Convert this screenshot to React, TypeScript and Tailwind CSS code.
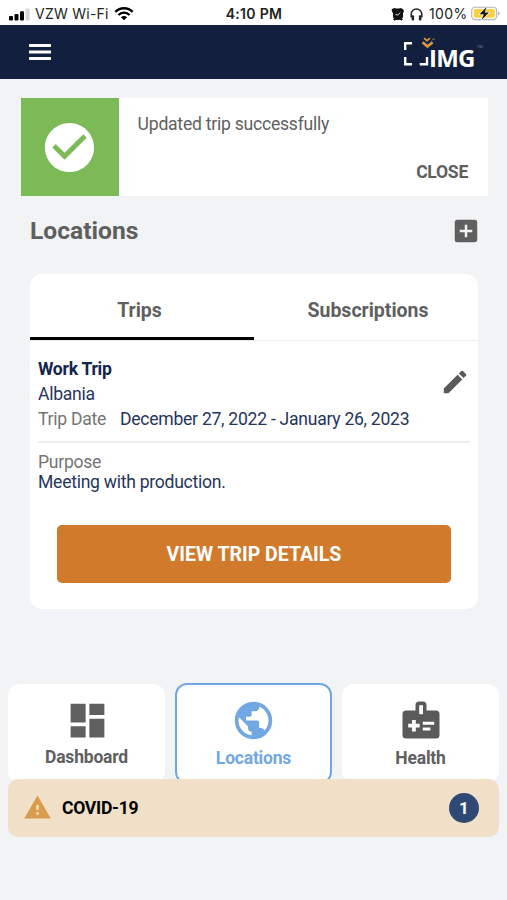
import type { ReactNode } from 'react';
import { MdAddBox, MdCheckCircle, MdDashboard, MdEdit, MdPublic, MdWarning } from 'react-icons/md';

const TABS = [
    { key: 'trips', label: 'Trips' },
    { key: 'subscriptions', label: 'Subscriptions' },
] as const;

function StatusBar() {
    return (
        <div className="flex h-[25px] shrink-0 items-center bg-white pt-[3px] font-[Inter] text-[14px] leading-[20px] text-[#222]">
            <div className="flex w-[200px] items-center pl-[9px]">
                <svg width="21" height="13" viewBox="0 0 21 13">
                    <rect x="0" y="8" width="4" height="4.5" rx="1" fill="#000" />
                    <rect x="5.5" y="6" width="4" height="6.5" rx="1" fill="#000" />
                    <rect x="11" y="3.2" width="4" height="9.3" rx="1" fill="#000" />
                    <rect x="16.6" y="0.5" width="4" height="12" rx="1" fill="#d6d6d6" />
                </svg>
                <span className="ml-[5px] w-[75px] whitespace-nowrap text-[14px] tracking-[0.25px]">VZW Wi-Fi</span>
                <svg className="-mt-[2px] ml-[4px]" width="20" height="15" viewBox="0 0 20 15" fill="none" stroke="#000" strokeWidth="2.4">
                    <path d="M1.4 5.8a12.3 12.3 0 0 1 17.2 0" />
                    <path d="M4.4 9a7.9 7.9 0 0 1 11.2 0" />
                    <path d="M6.9 11.2a4.4 4.4 0 0 1 6.2 0L10 14.3z" fill="#000" stroke="none" />
                </svg>
            </div>
            <div className="w-[108px] text-center text-[14px] font-semibold tracking-[0.3px]">4:10 PM</div>
            <div className="flex w-[199px] items-center pl-[83px]">
                <svg className="shrink-0" width="13" height="13" viewBox="0 0 13 13">
                    <path d="M1 1.5L3.5.5 5 1h3l1.500-.5 2.500 1 .3 2.500-.8 1v4.200l-.8 1.200.6 1.200-1 .6-1.100-.8H4.800l-1.100.8-1-.6.6-1.200-.8-1.200V5l-.8-1z" fill="#111" stroke="#111" strokeWidth="1" />
                    <path d="M6.700 7.100L9.100 4.700M6.700 7.100L4.600 6.500" stroke="#fff" strokeWidth="0.9" />
                </svg>
                <svg className="ml-[6px] shrink-0" width="13" height="13" viewBox="0 0 13 13">
                    <path d="M1.2 9.5V6.3a5.3 5.3 0 0 1 10.6 0v3.2" fill="none" stroke="#222" strokeWidth="1.5" />
                    <rect x="1.6" y="7.3" width="2.5" height="5.2" rx="1" fill="#222" />
                    <rect x="8.9" y="7.3" width="2.5" height="5.2" rx="1" fill="#222" />
                </svg>
                <span className="ml-[6px] w-[39px] whitespace-nowrap text-[14px] tracking-[0.35px]">100%</span>
                <svg className="-mt-[2px] ml-[3px] shrink-0" width="30" height="15" viewBox="0 0 30 15">
                    <rect x="0.7" y="1.2" width="25" height="12.4" rx="3.6" fill="#fff" stroke="#b5b5ae" strokeWidth="1.1" />
                    <rect x="2.6" y="3.1" width="21.2" height="8.6" rx="2" fill="#fccf3e" />
                    <path d="M27.2 5.3a2.3 2.3 0 0 1 0 4.2z" fill="#aaa" />
                    <path d="M15.8 0.8L8.6 8.2h4.2l-2.2 5.9 7.3-7.5h-4.2z" fill="#111" stroke="#fff" strokeWidth="1.2" paintOrder="stroke" />
                </svg>
            </div>
        </div>
    );
}

function Logo() {
    return (
        <div className="relative h-[34px] w-[82px]">
            <svg width="82" height="34" viewBox="0 0 82 34">
                <g fill="none" stroke="#fff" strokeWidth="2.4">
                    <path d="M10 8.200H3.200V15" />
                    <path d="M3.200 22v7.300H10" />
                    <path d="M25 22v7.300h-7.300" />
                </g>
                <g fill="none" stroke="#dc9841">
                    <path d="M20.500 7.200l5 4.300 5-4.300" strokeWidth="2.6" />
                    <path d="M22 3.200l3 2.500 3-2.500" strokeWidth="1.7" />
                    <path d="M30 5.500l1.200-1.800 1.800.8" stroke="#8f7452" strokeWidth="1" />
                </g>
            </svg>
            <span className="absolute left-[27px] top-[6px] font-['Open_Sans'] text-[24px] font-bold leading-[33px] tracking-[-0.8px] text-white">IMG</span>
            <span className="absolute left-[75px] top-[8px] font-['Open_Sans'] text-[4px] leading-[8px] text-[#77809a]">TM</span>
        </div>
    );
}

function HealthBadge() {
    return (
        <svg width="38" height="38" viewBox="0 0 38 38">
            <path d="M13.5 9.5V4A3.5 3.5 0 0 1 17 .5h4A3.5 3.5 0 0 1 24.5 4v5.5H34a3.5 3.5 0 0 1 3.5 3.5v21a3.5 3.5 0 0 1-3.5 3.5H4A3.5 3.5 0 0 1 .5 34V13A3.5 3.5 0 0 1 4 9.5z" fill="#5a5a5a" />
            <path d="M17.2 4.2H21v9h-3.800z" fill="#fff" />
            <path d="M10 19h3.800v3.800h3.800v3.800h-3.800v3.800H10v-3.800H6.200v-3.800H10zM20.800 20.800h11.400v2.900H20.800zM20.800 26.500h7.600v2.900h-7.600z" fill="#fff" />
        </svg>
    );
}

function NavCard({ icon, label, active = false }: { icon: ReactNode; label: string; active?: boolean }) {
    return (
        <div className={`flex w-[157px] flex-col items-center rounded-[12px] bg-white ${active
            ? '-mt-px h-[101px] border-[2.5px] border-[#71a8e4] pt-[13px] text-[#71a8e4]'
            : 'h-[99px] pt-[14px] text-[#5f5f5f]'}`}>
            <div className="flex h-[45px] items-center">{icon}</div>
            <span className={`text-[17.5px] font-bold leading-[22px] tracking-[-0.2px] ${label === 'Dashboard' ? 'mt-[3px]' : 'mt-[4px]'}`}>{label}</span>
        </div>
    );
}

export default function App() {
    return (
        <div className="flex h-[900px] w-[507px] flex-col overflow-hidden bg-[#f1f3f5] font-[Roboto] text-[#5f5f5f]">
            <StatusBar />

            <header className="flex h-[54px] shrink-0 items-center justify-between bg-[#121f3e] pl-[29px] pr-[23px]">
                <button aria-label="Menu">
                    <svg width="22" height="16" viewBox="0 0 22 16" fill="#fff">
                        <path d="M0 0h22v3H0zM0 6.500h22v3H0zM0 13h22v3H0z" />
                    </svg>
                </button>
                <Logo />
            </header>

            {/* Notification */}
            <div className="ml-[20.600px] mt-[19.400px] flex h-[97.600px] w-[467.400px] shrink-0 bg-white">
                <div className="flex w-[98px] items-center justify-center bg-[#7cba57]">
                    <MdCheckCircle className="size-[59px] text-white" />
                </div>
                <div className="flex flex-1 flex-col justify-between pb-[13px] pl-[19px] pr-[20px] pt-[15px]">
                    <p className="text-[17.6px] leading-[22px] tracking-[-0.25px]">Updated trip successfully</p>
                    <button className="self-end text-[17.6px] font-bold leading-[22px] tracking-[-0.3px]">CLOSE</button>
                </div>
            </div>

            <div className="mt-[16px] flex h-[39px] shrink-0 items-center justify-between pl-[30px] pr-[26px]">
                <h1 className="text-[24.6px] font-bold leading-[32px]">Locations</h1>
                <MdAddBox className="size-[30px]" />
            </div>

            <section className="ml-[30px] mt-[23px] h-[335px] w-[448px] shrink-0 rounded-[12px] bg-white">
                <div className="flex h-[67px] border-b border-[#ebedef]">
                    {TABS.map(tab => (
                        <button key={tab.key}
                            className={`h-[66px] w-1/2 pt-[11px] text-[19.5px] font-bold leading-[24px] ${tab.key === 'trips' ? 'border-b-[3.5px] border-black pr-[5px]' : 'border-b-[3.5px] border-transparent pl-[4px]'}`}>
                            {tab.label}
                        </button>
                    ))}
                </div>

                <div className="px-[8px] pt-[16px] text-[17.6px] tracking-[-0.28px] text-[#26355b]">
                    <div className="flex h-[86px] justify-between border-b-2 border-[#eceef0]">
                        <div className="leading-[25px]">
                            <h2 className="font-bold text-[#14254c]">Work Trip</h2>
                            <p>Albania</p>
                            <p className="whitespace-nowrap"><span className="mr-[14px] text-[#757575]">Trip Date</span>December 27, 2022 - January 26, 2023</p>
                        </div>
                        <MdEdit className="mt-[10px] size-[30px] text-[#5a5a5a]" />
                    </div>
                    <div className="mt-[9px] leading-[20px]">
                        <p className="text-[#757575]">Purpose</p>
                        <p>Meeting with production.</p>
                    </div>
                </div>

                <button className="ml-[27px] mt-[33px] h-[58px] w-[394px] rounded-[5px] bg-[#d17a2c] pt-[2px] text-[19.5px] font-bold text-white">
                    VIEW TRIP DETAILS
                </button>
            </section>

            <nav className="mt-[75px] flex h-[95px] shrink-0 items-start justify-between px-[8px]">
                <NavCard icon={<MdDashboard className="ml-px size-[45px]" />} label="Dashboard" />
                <NavCard icon={<MdPublic className="size-[45px]" />} label="Locations" active />
                <NavCard icon={<HealthBadge />} label="Health" />
            </nav>

            <div className="relative mx-[8px] flex h-[58px] shrink-0 items-center rounded-[10px] bg-[#f0e0c7] pl-[15px] pr-[20px] text-black">
                <MdWarning className="size-[29px] text-[#d99b4c]" />
                <span className="ml-[10px] pt-px text-[17.6px] font-bold tracking-[-0.3px]">COVID-19</span>
                <span className="ml-auto flex size-[30px] items-center justify-center rounded-full bg-[#304876] pt-px text-[17px] font-bold text-white">1</span>
            </div>
        </div>
    );
}
